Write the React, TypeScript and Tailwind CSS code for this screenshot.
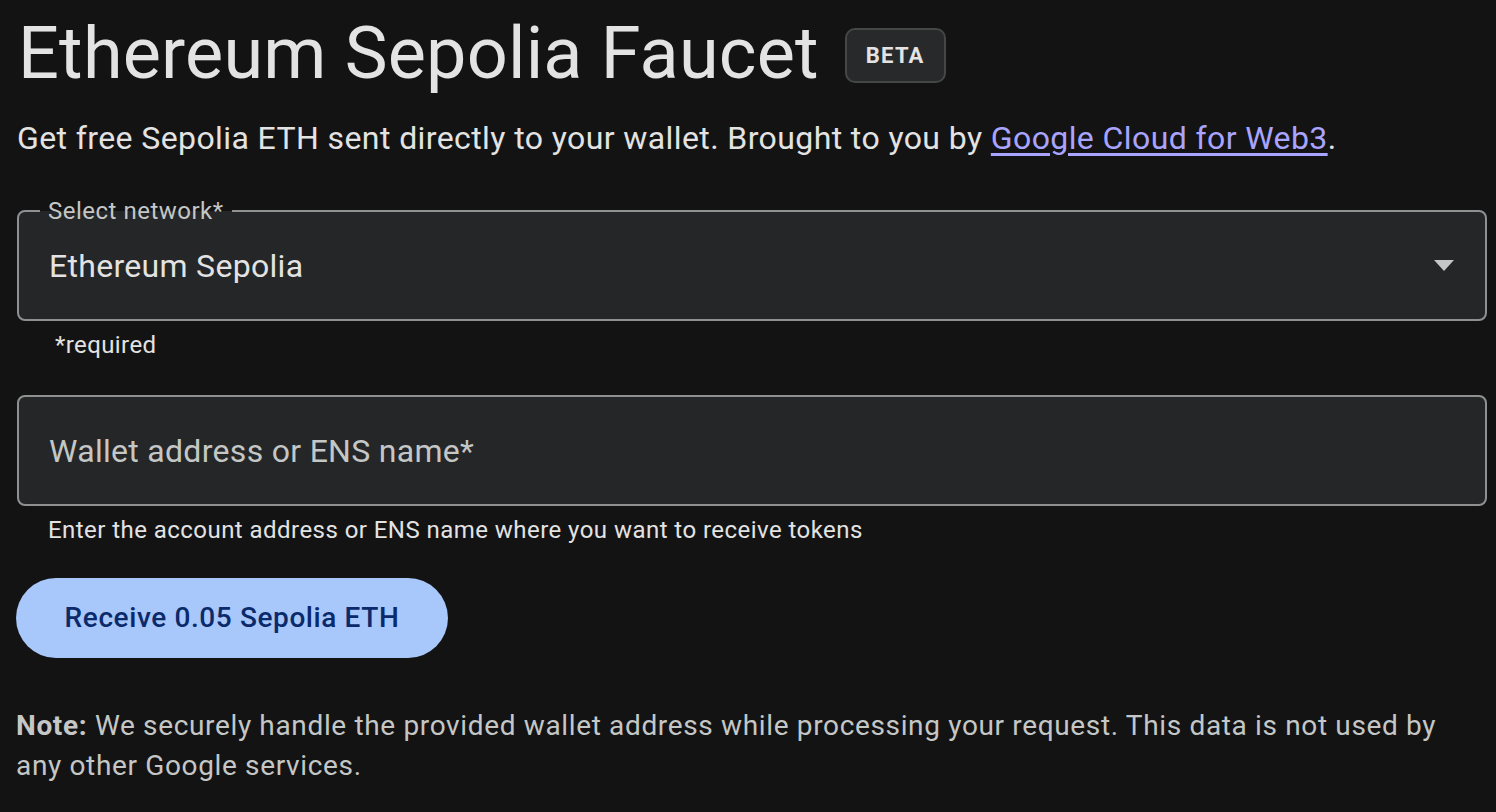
import React from 'react';

const App: React.FC = () => {
  return (
    <div className="min-h-screen w-full bg-[#131314] text-[#e3e3e3] font-['Roboto','Open_Sans',sans-serif] pl-4 pr-[9px] pt-[10px]">
      {/* Header */}
      <div className="flex items-center gap-[26px] pl-[2px]">
        <h1 className="text-[72px] leading-[88px] font-normal tracking-[0.2px] text-[#e3e3e3]">
          Ethereum Sepolia Faucet
        </h1>
        <span className="mt-[2px] flex h-[55px] items-center rounded-[10px] border-2 border-[#444746] bg-[#28292a] px-[19px] text-[22px] font-bold tracking-[1.2px] text-[#e3e3e3]">
          BETA
        </span>
      </div>

      <p className="mt-[20px] pl-[1px] text-[32px] leading-[40px] tracking-[0.4px] text-[#e3e3e3]">
        Get free Sepolia ETH sent directly to your wallet. Brought to you by{' '}
        <a href="#" className="text-[#a8a4ff] underline underline-offset-4">
          Google Cloud for Web3
        </a>
        .
      </p>

      {/* Network select */}
      <div className="relative mt-[52px] ml-px">
        <div className="flex h-[111px] items-center justify-between rounded-[8px] border-2 border-[#8e918f] bg-[#252628] pl-[30px] pr-[30px]">
          <span className="text-[32px] tracking-[0.3px] text-[#e3e3e3]">Ethereum Sepolia</span>
          <svg width="20" height="12" viewBox="0 0 20 12" className="mr-[1px]">
            <path d="M0 0 L20 0 L10 11 Z" fill="#c4c7c5" />
          </svg>
        </div>
        <span className="absolute -top-[13px] left-[23px] bg-linear-to-b from-[#131314] from-50% to-[#252628] to-50% px-[8px] text-[24px] leading-[28px] tracking-[0.5px] text-[#c4c7c5]">
          Select network*
        </span>
      </div>
      <div className="mt-[9px] pl-[39px] text-[24px] leading-[30px] tracking-[0.4px] text-[#e3e3e3]">*required</div>

      {/* Wallet input */}
      <div className="mt-[35px] ml-px flex h-[111px] items-center rounded-[8px] border-2 border-[#8e918f] bg-[#252628] pl-[30px]">
        <span className="text-[32px] tracking-[0.3px] text-[#c4c7c5]">Wallet address or ENS name*</span>
      </div>
      <div className="mt-[9px] pl-[32px] text-[24px] leading-[30px] tracking-[0.45px] text-[#e3e3e3]">
        Enter the account address or ENS name where you want to receive tokens
      </div>

      {/* Button */}
      <button className="mt-[33px] flex h-[80px] w-[432px] items-center justify-center rounded-full bg-[#a8c7fa] text-[28px] font-medium tracking-[0.6px] text-[#0b2a6b]">
        Receive 0.05 Sepolia ETH
      </button>

      {/* Note */}
      <p className="mt-[48px] max-w-[1450px] text-[28px] leading-[40px] tracking-[0.65px] text-[#c4c7c5]">
        <span className="font-bold">Note:</span> We securely handle the provided wallet address while processing your
        request. This data is not used by any other Google services.
      </p>
    </div>
  );
};

export default App;
